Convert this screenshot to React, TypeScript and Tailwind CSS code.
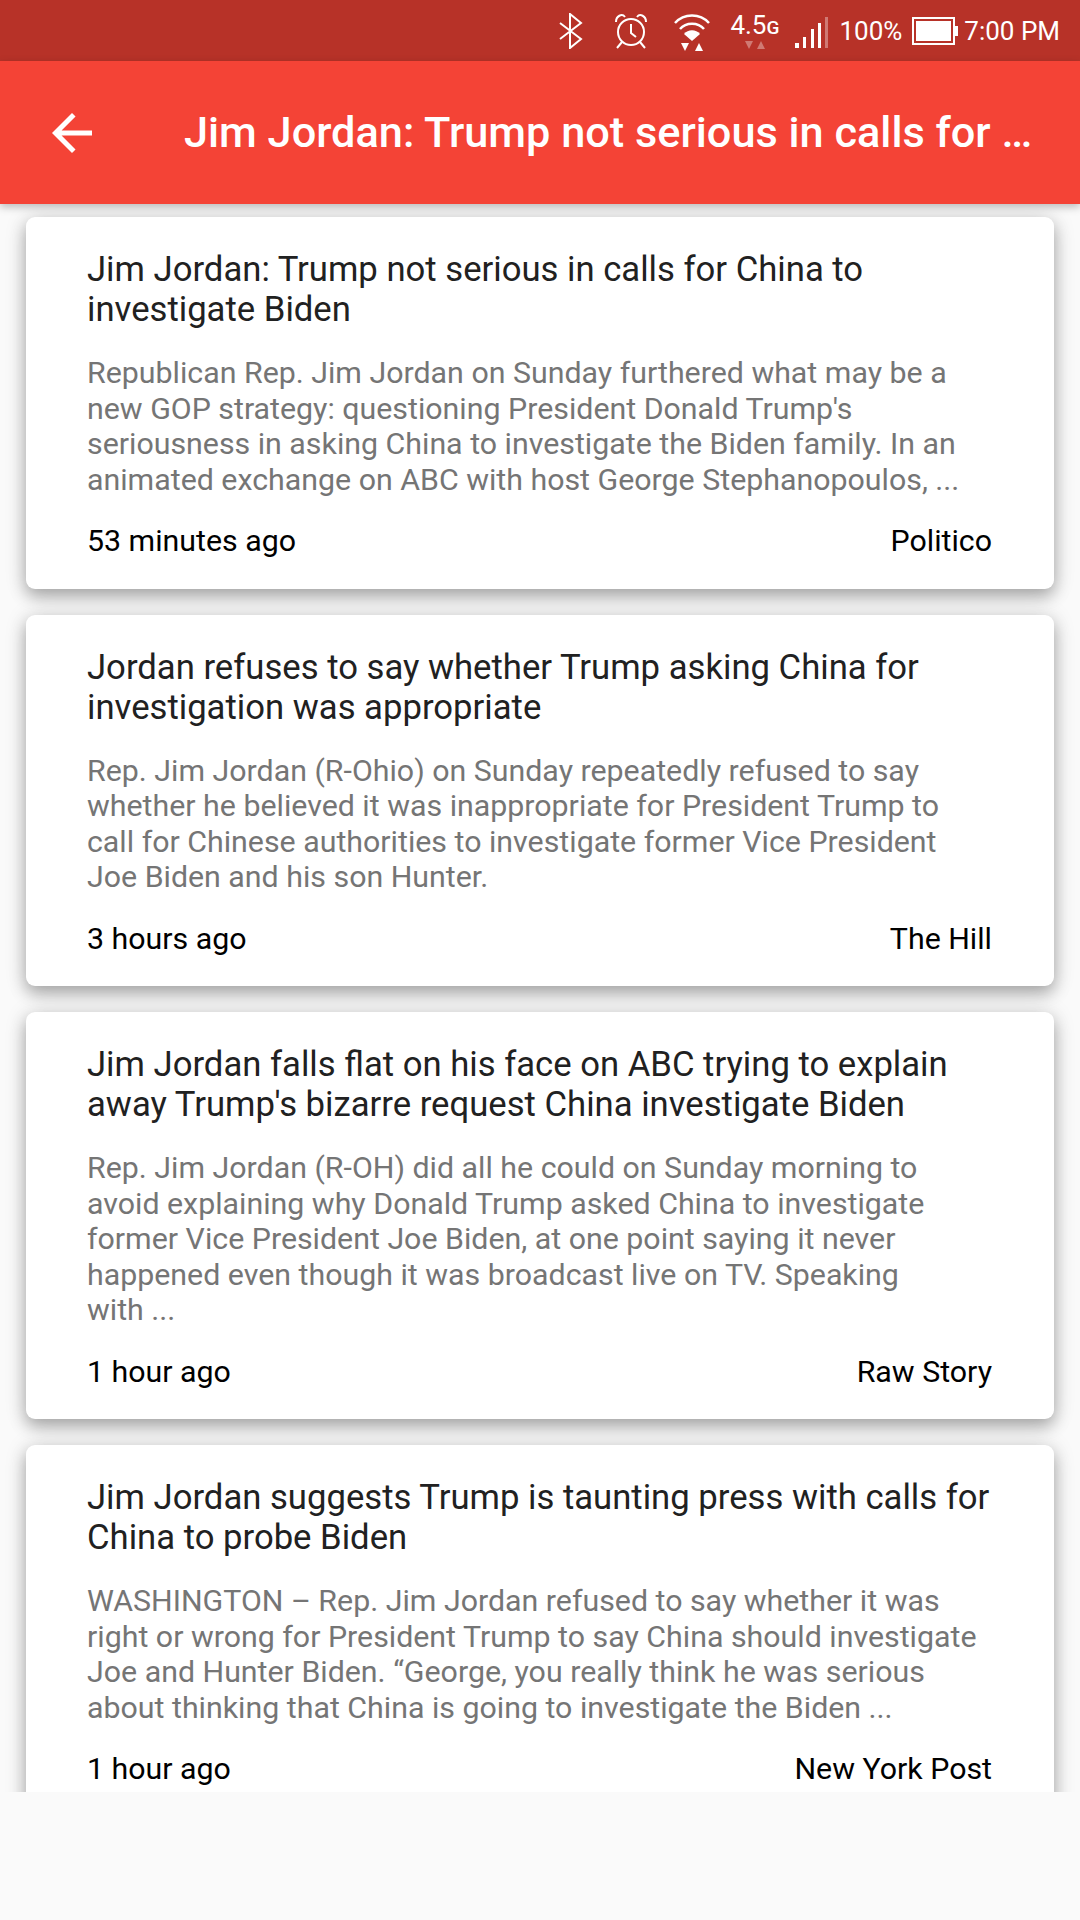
const articles = [
  {
    title: 'Jim Jordan: Trump not serious in calls for China to investigate Biden',
    body: "Republican Rep. Jim Jordan on Sunday furthered what may be a new GOP strategy: questioning President Donald Trump's seriousness in asking China to investigate the Biden family. In an animated exchange on ABC with host George Stephanopoulos, ...",
    time: '53 minutes ago',
    source: 'Politico',
  },
  {
    title: 'Jordan refuses to say whether Trump asking China for investigation was appropriate',
    body: 'Rep. Jim Jordan (R-Ohio) on Sunday repeatedly refused to say whether he believed it was inappropriate for President Trump to call for Chinese authorities to investigate former Vice President Joe Biden and his son Hunter.',
    time: '3 hours ago',
    source: 'The Hill',
  },
  {
    title: "Jim Jordan falls flat on his face on ABC trying to explain away Trump's bizarre request China investigate Biden",
    body: 'Rep. Jim Jordan (R-OH) did all he could on Sunday morning to avoid explaining why Donald Trump asked China to investigate former Vice President Joe Biden, at one point saying it never happened even though it was broadcast live on TV. Speaking with\u00a0...',
    time: '1 hour ago',
    source: 'Raw Story',
  },
  {
    title: 'Jim Jordan suggests Trump is taunting press with calls for China to probe Biden',
    body: 'WASHINGTON – Rep. Jim Jordan refused to say whether it was right or wrong for President Trump to say China should investigate Joe and Hunter Biden. “George, you really think he was serious about thinking that China is going to investigate the Biden ...',
    time: '1 hour ago',
    source: 'New York Post',
  },
];

function BluetoothIcon() {
  return (
    <svg width="26" height="36" viewBox="0 0 26 36" className="mr-[30px]" fill="none" stroke="white" strokeWidth="2">
      <path d="M2 10 L23 26 L12 35 L12 1 L23 10 L2 26" />
    </svg>
  );
}

function AlarmIcon() {
  return (
    <svg width="34" height="36" viewBox="0 0 34 36" fill="none" stroke="white" strokeWidth="2" className="mr-[26px]">
      <circle cx="17" cy="19" r="13" />
      <path d="M17 11 V20 L22 24" />
      <path d="M2 9 C2 3 8 0 11 4 M32 9 C32 3 26 0 23 4 M8 29 L3 35 M26 29 L31 35" />
    </svg>
  );
}

function WifiIcon() {
  return (
    <svg width="36" height="40" viewBox="0 0 36 40" fill="white" className="mr-[20px] mt-[4px]">
      <path d="M1 10 C10 0 26 0 35 10 M6 16 C12 9 24 9 30 16" fill="none" stroke="white" strokeWidth="2.5" />
      <path d="M18 28 L10 21 C14 16 22 16 26 21 Z" />
      <path d="M7 30 H15 L11 38 Z M21 38 H29 L25 30 Z" />
    </svg>
  );
}

function NetworkLabel() {
  return (
    <div className="mr-[16px] flex flex-col items-center">
      <span className="text-[26px] leading-[26px]">
        4.5<span className="text-[19px] font-medium">G</span>
      </span>
      <svg width="22" height="8" viewBox="0 0 22 8" fill="white" opacity="0.35">
        <path d="M1 0 H9 L5 8 Z M13 8 H21 L17 0 Z" />
      </svg>
    </div>
  );
}

function SignalIcon() {
  return (
    <svg width="34" height="32" viewBox="0 0 34 32" fill="white" className="mr-[10px] mt-[4px]">
      <rect x="0" y="26" width="4" height="5" />
      <rect x="8" y="20" width="3" height="11" />
      <rect x="16" y="12" width="3" height="19" />
      <rect x="23" y="6" width="3" height="25" />
      <rect x="30" y="0" width="3" height="31" opacity="0.35" />
    </svg>
  );
}

function BatteryIcon() {
  return (
    <div className="mr-[6px] flex items-center">
      <div className="h-[28px] w-[43px] border-[2px] border-white p-[2px]">
        <div className="h-full w-full bg-white" />
      </div>
      <div className="h-[10px] w-[3px] bg-white" />
    </div>
  );
}

function Card({ title, body, time, source }: (typeof articles)[number]) {
  return (
    <div className="mx-[26px] mb-[26px] shrink-0 rounded-[9px] bg-white pt-[32px] pr-[62px] pb-[28.500px] pl-[61px] shadow-[0_8px_16px_rgba(0,0,0,0.26),0_2px_22px_rgba(0,0,0,0.16)]">
      <h2 className="text-[34.670px] leading-[40px] text-[#212121]">{title}</h2>
      <p className="mt-[26px] text-[30.330px] leading-[35.500px] text-[#757575]">{body}</p>
      <div className="mt-[25px] flex justify-between text-[30.330px] leading-[38px] text-black">
        <span>{time}</span>
        <span>{source}</span>
      </div>
    </div>
  );
}

export default function App() {
  return (
    <div className="flex h-[1920px] w-[1080px] flex-col overflow-hidden bg-[#fafafa] font-['Roboto',sans-serif]">
      <div className="flex h-[61px] shrink-0 items-center justify-end bg-[#b73228] pr-[20px] text-[26px] text-white">
        <BluetoothIcon />
        <AlarmIcon />
        <WifiIcon />
        <NetworkLabel />
        <SignalIcon />
        <span className="mt-[2px] mr-[10px]">100%</span>
        <BatteryIcon />
        <span className="mt-[2px]">7:00 PM</span>
      </div>
      <div className="z-10 flex h-[143px] shrink-0 items-center bg-[#f44336] shadow-[0_3px_8px_rgba(0,0,0,0.25)]">
        <svg width="60" height="60" viewBox="0 0 24 24" fill="white" className="ml-[42px] shrink-0">
          <path d="M20 11H7.830l5.590-5.590L12 4l-8 8 8 8 1.410-1.410L7.830 13H20v-2z" />
        </svg>
        <h1 className="mt-[2px] ml-[82px] whitespace-nowrap text-[43.300px] font-medium text-white">
          Jim Jordan: Trump not serious in calls for …
        </h1>
      </div>
      <div className="flex h-[1588px] flex-col overflow-hidden pt-[13px]">
        {articles.map((a) => (
          <Card key={a.source} {...a} />
        ))}
      </div>
    </div>
  );
}
